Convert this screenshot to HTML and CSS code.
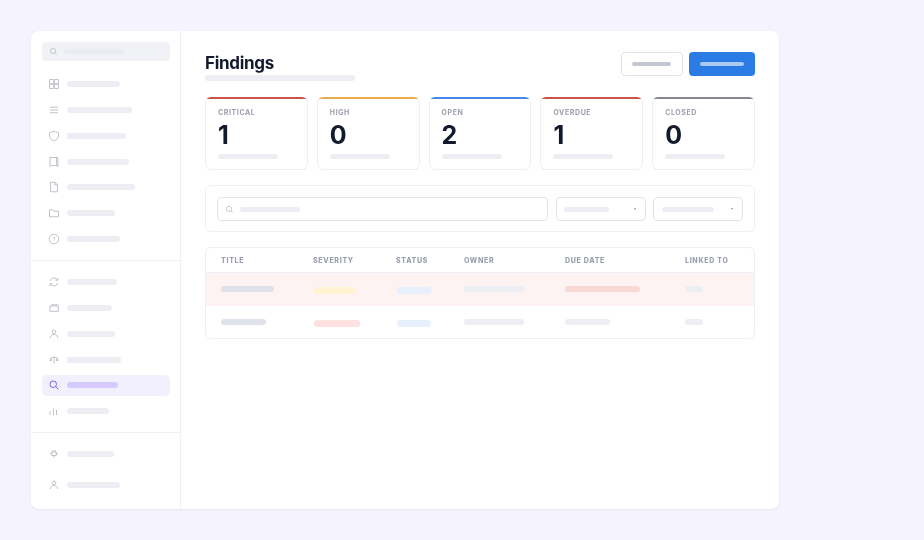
FILE: index.html
```html
<!DOCTYPE html>
<html lang="en">
<head>
<meta charset="utf-8">
<title>Findings</title>
<link rel="stylesheet" href="styles.css">
</head>
<body>
<svg class="defs" width="0" height="0" aria-hidden="true">
  <defs>
    <symbol id="i-search" viewBox="3 3 19 19"><circle cx="11" cy="11" r="7"/><path d="M16.5 16.5 21 21"/></symbol>
    <symbol id="i-user" viewBox="0 0 24 24"><circle cx="12" cy="7.500" r="3.500"/><path d="M4.500 20c0-4 3-7 7.500-7s7.500 3 7.500 7"/></symbol>
  </defs>
</svg>
<div class="app">
  <aside class="sidebar">
    <div class="side-search">
      <svg class="ico-s"><use href="#i-search"/></svg>
      <span class="bar side-search-bar"></span>
    </div>
    <nav class="nav nav-first">
      <div class="nav-item"><svg class="ico" viewBox="0 0 24 24"><rect x="3" y="3" width="8.500" height="8.500" rx="1"/><rect x="12.500" y="3" width="8.500" height="8.500" rx="1"/><rect x="3" y="12.500" width="8.500" height="8.500" rx="1"/><rect x="12.500" y="12.500" width="8.500" height="8.500" rx="1"/></svg><span class="bar w53"></span></div>
      <div class="nav-item"><svg class="ico" viewBox="0 0 24 24"><path d="M4 6.500h16M4 12h16M4 17.500h16"/></svg><span class="bar w65"></span></div>
      <div class="nav-item"><svg class="ico" viewBox="0 0 24 24"><path d="M12 2.500 21 5.500v6.500c0 4.500-3.600 7.500-9 9.500-5.400-2-9-5-9-9.500V5.500z"/></svg><span class="bar w59"></span></div>
      <div class="nav-item"><svg class="ico" viewBox="0 0 24 24"><path d="M4 3h16v18l-3-2H7l-3 2zM17 3v16"/></svg><span class="bar w62"></span></div>
      <div class="nav-item"><svg class="ico" viewBox="0 0 24 24"><path d="M5 2.500h9l5 5.500v13.500H5zM14 2.500V8h5"/></svg><span class="bar w68"></span></div>
      <div class="nav-item"><svg class="ico" viewBox="0 0 24 24"><path d="M3 5.500h6.500l2 3H21v11H3z"/></svg><span class="bar w48"></span></div>
      <div class="nav-item"><svg class="ico" viewBox="0 0 24 24"><circle cx="12" cy="12" r="9.500"/><path d="M12 8v5M12 15.500v.5"/></svg><span class="bar w53"></span></div>
    </nav>
    <nav class="nav nav-second">
      <div class="nav-item"><svg class="ico" viewBox="0 0 24 24"><path d="M4.500 10a7.500 7.500 0 0 1 13-3.500l2 2M19.500 4v4.500H15M19.500 14a7.500 7.500 0 0 1-13 3.500l-2-2M4.500 20v-4.500H9"/></svg><span class="bar w50"></span></div>
      <div class="nav-item"><svg class="ico" viewBox="0 0 24 24"><rect x="4" y="8" width="16.500" height="10.500"/><path d="M6 5.500h14"/></svg><span class="bar w45"></span></div>
      <div class="nav-item"><svg class="ico"><use href="#i-user"/></svg><span class="bar w48"></span></div>
      <div class="nav-item"><svg class="ico" viewBox="0 0 24 24"><path d="M12 5v14M5.500 8c4-2 9-2 13 0M5.500 8 3.500 13h4zM18.500 8l-2 5h4z"/></svg><span class="bar w54"></span></div>
      <div class="nav-item nav-active"><svg class="ico" viewBox="0 0 24 24"><circle cx="10.500" cy="10.500" r="6.500"/><path d="m15.500 15.500 5 5"/></svg><span class="bar w51"></span></div>
      <div class="nav-item"><svg class="ico" viewBox="0 0 24 24"><path d="M4 12v8M11 7v13M17 10v10"/></svg><span class="bar w42"></span></div>
    </nav>
    <nav class="nav nav-third">
      <div class="nav-item"><svg class="ico" viewBox="0 0 24 24"><path d="M9.500 4v4M14.500 4v4M7.500 8h9v7h-9zM4.500 11.500h3M16.500 11.500h3M12 15v5"/></svg><span class="bar w47"></span></div>
      <div class="nav-item nav-last"><svg class="ico"><use href="#i-user"/></svg><span class="bar w53"></span></div>
    </nav>
  </aside>

  <main class="main">
    <header class="head">
      <div class="head-left">
        <h1 class="title">Findings</h1>
        <span class="bar sub"></span>
      </div>
      <div class="actions">
        <div class="btn btn-ghost"><span class="btn-bar"></span></div>
        <div class="btn btn-primary"><span class="btn-bar"></span></div>
      </div>
    </header>

    <section class="stats">
      <div class="stat critical"><div class="stat-label">CRITICAL</div><div class="stat-num">1</div><span class="bar stat-bar"></span></div>
      <div class="stat high"><div class="stat-label">HIGH</div><div class="stat-num">0</div><span class="bar stat-bar"></span></div>
      <div class="stat open"><div class="stat-label">OPEN</div><div class="stat-num">2</div><span class="bar stat-bar"></span></div>
      <div class="stat overdue"><div class="stat-label">OVERDUE</div><div class="stat-num">1</div><span class="bar stat-bar"></span></div>
      <div class="stat closed"><div class="stat-label">CLOSED</div><div class="stat-num">0</div><span class="bar stat-bar"></span></div>
    </section>

    <section class="filters">
      <div class="field field-search"><svg class="ico-s"><use href="#i-search"/></svg><span class="bar fs-bar"></span></div>
      <div class="field field-sel"><span class="bar sa-bar"></span><span class="caret"></span></div>
      <div class="field field-sel sel-last"><span class="bar sb-bar"></span><span class="caret"></span></div>
    </section>

    <section class="table">
      <div class="row row-head">
        <div>TITLE</div><div>SEVERITY</div><div>STATUS</div><div>OWNER</div><div>DUE DATE</div><div>LINKED TO</div>
      </div>
      <div class="row row-body row-alert">
        <div><span class="bar c-title w53"></span></div>
        <div><span class="pill p-amber"></span></div>
        <div><span class="pill p-blue"></span></div>
        <div><span class="bar c-owner"></span></div>
        <div><span class="bar c-due-red"></span></div>
        <div><span class="bar c-link"></span></div>
      </div>
      <div class="row row-body row-last">
        <div><span class="bar c-title w45"></span></div>
        <div><span class="pill p-red"></span></div>
        <div><span class="pill p-blue"></span></div>
        <div><span class="bar c-owner"></span></div>
        <div><span class="bar c-due"></span></div>
        <div><span class="bar c-link"></span></div>
      </div>
    </section>
  </main>
</div>
</body>
</html>
```
FILE: styles.css
```css
* { box-sizing: border-box; }
html, body { margin: 0; height: 100%; }
body {
  background: #f5f4fe;
  font-family: Inter, "Liberation Sans", sans-serif;
  padding: 31px 0 0 31px;
  overflow: hidden;
}
.defs { position: absolute; }
.app {
  width: 748px;
  height: 478px;
  background: #fff;
  border-radius: 8px;
  box-shadow: 0 1px 3px rgba(60, 60, 110, .08);
  display: flex;
  overflow: hidden;
}
.bar { display: block; height: 6px; border-radius: 3px; background: #eceef3; }
.w42 { width: 42px; } .w45 { width: 45px; } .w47 { width: 47px; } .w48 { width: 48px; }
.w50 { width: 50px; } .w51 { width: 51px; } .w53 { width: 53px; } .w54 { width: 54px; }
.w59 { width: 59px; } .w62 { width: 62px; } .w65 { width: 65px; } .w68 { width: 68px; }

/* Sidebar */
.sidebar { width: 150px; flex: none; border-right: 1px solid #f0f0f6; padding-top: 11px; }
.side-search {
  margin: 0 10px 0 11px;
  height: 19px;
  background: #f1f2f6;
  border-radius: 4px;
  display: flex;
  align-items: center;
  padding-left: 8px;
  gap: 7px;
}
.side-search-bar { width: 60px; height: 5px; background: #eaecf1; }
.ico-s { width: 7px; height: 7px; flex: none; fill: none; stroke: #b4b7c1; stroke-width: 2; overflow: visible; }
.nav-first { padding-top: 10.100px; border-bottom: 1px solid #eeeef4; height: 200px; }
.nav-second { padding-top: 8.100px; border-bottom: 1px solid #eeeef4; height: 172px; }
.nav-third { padding-top: 8.100px; }
.nav-item {
  height: 25.850px;
  margin: 0 10px 0 11px;
  display: flex;
  align-items: center;
  gap: 7px;
  padding-left: 6px;
  border-radius: 5px;
}
.ico { width: 12px; height: 12px; flex: none; fill: none; stroke: #b0b4be; stroke-width: 1.600; }
.nav-active { background: #f3f0fe; height: 21px; margin-top: 2.500px; margin-bottom: 2.350px; }
.nav-active .ico { stroke: #7c5ce6; stroke-width: 2; }
.nav-active .bar { background: #d5cafb; }
.nav-last { margin-top: 5.150px; }

/* Main */
.main { flex: 1; min-width: 0; padding: 21px 24px 0; will-change: transform; }
.head { display: flex; justify-content: space-between; align-items: flex-start; height: 45px; }
.title { margin: 0; font-size: 17px; line-height: 22px; font-weight: 700; letter-spacing: -.3px; color: #131a2e; }
.sub { width: 150px; margin-top: 1px; }
.actions { display: flex; gap: 6px; }
.btn { height: 24px; border-radius: 4px; display: flex; align-items: center; }
.btn-ghost { width: 62px; border: 1px solid #e2e4ec; background: #fff; padding-left: 10px; }
.btn-ghost .btn-bar { width: 39px; background: #c3c7d1; }
.btn-primary { width: 66px; background: #2b7be4; padding-left: 11px; }
.btn-primary .btn-bar { width: 44px; background: #a9c9f4; }
.btn-bar { display: block; height: 4px; border-radius: 2px; }

.stats { display: grid; grid-template-columns: repeat(5, 1fr); gap: 9px; }
.stat {
  height: 73px;
  border: 1px solid #eeeff4;
  border-top-color: transparent;
  border-radius: 6px;
  padding: 10px 12px 0;
  background: linear-gradient(var(--accent), var(--accent)) top / 100% 2px no-repeat border-box;
}
.critical, .overdue { --accent: #c8544a; }
.high { --accent: #e7ad50; }
.open { --accent: #4489ea; }
.closed { --accent: #838794; }
.stat-label { font-size: 7px; line-height: 9px; font-weight: 700; letter-spacing: .6px; color: #9a9fae; }
.stat-num { font-size: 25px; line-height: 30px; font-weight: 700; color: #131a2e; margin-top: 3px; }
.stat-bar { width: 60px; height: 5px; margin-top: 4px; }

.filters {
  margin-top: 15px;
  height: 47px;
  border: 1px solid #eeeff4;
  border-radius: 6px;
  padding: 11px;
  display: flex;
  gap: 7.500px;
}
.field {
  height: 24px;
  border: 1px solid #e2e4ec;
  border-radius: 4px;
  display: flex;
  align-items: center;
  background: #fff;
}
.field-search { flex: 1; padding-left: 8px; gap: 7px; }
.fs-bar { width: 60px; height: 5px; }
.field-sel { width: 90px; padding: 0 9px 0 7px; justify-content: space-between; }
.sel-last { padding-left: 8px; }
.sa-bar { width: 45px; height: 5px; }
.sb-bar { width: 52px; height: 5px; }
.caret { width: 0; height: 0; border-left: 1.500px solid transparent; border-right: 1.500px solid transparent; border-top: 2px solid #8a8f9c; }

.table {
  margin-top: 15px;
  border: 1px solid #eeeff4;
  border-radius: 6px;
  overflow: hidden;
}
.row {
  display: grid;
  grid-template-columns: 92px 83px 68px 101px 120px 1fr;
  padding-left: 15px;
}
.row-head {
  height: 25px;
  align-items: center;
  border-bottom: 1px solid #eeeff4;
  font-size: 7px;
  font-weight: 800;
  letter-spacing: .7px;
  color: #9a9fae;
}
.row-body { height: 33px; padding-top: 13px; }
.row-last { height: 32px; }
.row-alert { background: #fcf3f2; }
.c-title { background: #dfe2ea; }
.c-owner { width: 60px; }
.c-due { width: 45px; }
.c-due-red { width: 75px; background: #fad8d3; }
.c-link { width: 18px; }
.pill { display: block; height: 7px; margin: 1px 0 0 1px; border-radius: 3px; }
.p-amber { width: 42px; background: #fff3d1; }
.p-red { width: 46px; background: #fee2e1; }
.p-blue { width: 34px; background: #e8effc; }
```
